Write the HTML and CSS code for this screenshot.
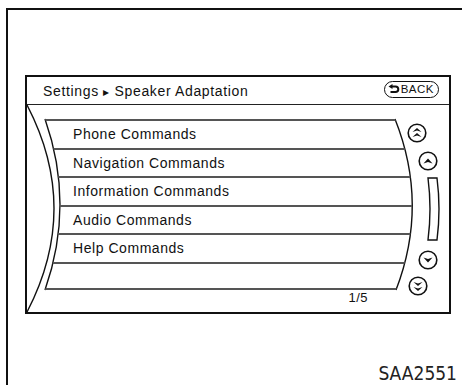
FILE: index.html
```html
<!DOCTYPE html>
<html lang="en">
  <head>
    <meta charset="UTF-8" />
    <meta name="viewport" content="width=device-width, initial-scale=1.0" />
    <title>Speaker Adaptation</title>
    <link rel="stylesheet" href="styles.css">
  </head>
  <body>
    <div class="page">
      <div class="screen">
        <div class="screen-head">
          <span class="crumb">Settings <span class="crumb-sep">&#9656;</span> Speaker Adaptation</span>
          <span class="back-btn">
            <svg class="back-icon" viewBox="0 0 12 10" width="12" height="10">
              <path d="M3.5 2.5 H7.5 A2.8 2.8 0 0 1 7.5 8.1 H2.5" fill="none" stroke="#111" stroke-width="2"/>
              <path d="M0.5 2.5 L4.5 0 L4.5 5 Z" fill="#111"/>
            </svg>BACK
          </span>
        </div>

        <div class="screen-body">
          <!-- decorative curved frame -->
          <svg class="frame-art" viewBox="0 0 422 207" width="422" height="207">
            <path d="M0 0 Q54 103.5 0 207" />
            <path d="M18 14 Q48 99.5 18 185" />
            <path d="M368 14 Q402 99.5 369 185" />
          </svg>

          <div class="menu-col">
            <ul class="menu">
              <li>Phone Commands</li>
              <li>Navigation Commands</li>
              <li>Information Commands</li>
              <li>Audio Commands</li>
              <li>Help Commands</li>
              <li></li>
            </ul>
            <div class="page-count">1/5</div>
          </div>

          <div class="scroll-col">
            <span class="round-btn btn-top">
              <svg viewBox="0 0 20 20" width="20" height="20">
                <circle cx="10" cy="10" r="8.8" />
                <polygon points="5.5,9 10,5 14.5,9 10,7.6" />
                <polygon points="5.5,14 10,10 14.5,14 10,12.6" />
              </svg>
            </span>
            <span class="round-btn btn-up">
              <svg viewBox="0 0 20 20" width="20" height="20">
                <circle cx="10" cy="10" r="8.8" />
                <polygon points="5.5,12.5 10,7.5 14.5,12.5 10,11" />
              </svg>
            </span>
            <span class="scroll-bar">
              <svg viewBox="0 0 15 64" width="15" height="64">
                <path d="M1 1 H10 Q14 32 10 63 H1 Q5 32 1 1 Z" />
              </svg>
            </span>
            <span class="round-btn btn-down">
              <svg viewBox="0 0 20 20" width="20" height="20">
                <circle cx="10" cy="10" r="8.8" />
                <polygon points="5.5,7.5 10,12.5 14.5,7.5 10,9" />
              </svg>
            </span>
            <span class="round-btn btn-bottom">
              <svg viewBox="0 0 20 20" width="20" height="20">
                <circle cx="10" cy="10" r="8.8" />
                <polygon points="5.5,6 10,10 14.5,6 10,7.4" />
                <polygon points="5.5,11 10,15 14.5,11 10,12.4" />
              </svg>
            </span>
          </div>
        </div>
      </div>

      <div class="fig-code">SAA2551</div>
    </div>
  </body>
</html>
```

FILE: styles.css
```css
/* Speaker Adaptation screen */

* {
  margin: 0;
  padding: 0;
  box-sizing: border-box;
}

body {
  width: 462px;
  height: 385px;
  overflow: hidden;
  background: #fff;
  color: #111;
  font-family: 'Liberation Sans', Arial, sans-serif;
}

/* Outer figure frame */
.page {
  margin: 8px 0 0 6px;
  height: 377px;
  border-top: 2px solid #111;
  border-left: 2px solid #111;
}

/* Display screen */
.screen {
  margin: 65px 0 0 17px;
  width: 426px;
  height: 239px;
  border: 2px solid #111;
  display: flex;
  flex-direction: column;
}

.screen-head {
  height: 28px;
  border-bottom: 1px solid #222;
  display: flex;
  align-items: center;
  justify-content: space-between;
  padding: 0 10px 0 16px;
}

.crumb {
  font-size: 14px;
  letter-spacing: 0.65px;
  white-space: nowrap;
}

.crumb-sep {
  font-size: 12px;
}

.back-btn {
  display: flex;
  align-items: center;
  gap: 1px;
  height: 17px;
  padding: 0 4px 0 3px;
  border: 1.5px solid #111;
  border-radius: 9px;
  font-size: 11.5px;
  letter-spacing: 0.5px;
  margin-top: -3px;
}

.back-icon {
  display: block;
}

/* Body with the curved list */
.screen-body {
  position: relative;
  flex: 1;
  display: flex;
}

.frame-art {
  position: absolute;
  left: 0;
  top: 0;
  pointer-events: none;
}

.frame-art path {
  fill: none;
  stroke: #111;
  stroke-width: 1.4;
}

.menu-col {
  margin: 14px 0 0 18px;
  width: 367px;
  display: flex;
  flex-direction: column;
}

.menu {
  list-style: none;
  height: 171px;
  border-bottom: 2px solid #555;
  clip-path: path('M0 0 L350 0 Q384 85.5 351 171 L0 171 Q30 85.5 0 0 Z');
}

.menu li {
  height: 28.5px;
  border-top: 2px solid #555;
  padding-left: 28px;
  font-size: 14px;
  letter-spacing: 0.55px;
  line-height: 26px;
  white-space: nowrap;
}

.page-count {
  text-align: right;
  padding-right: 44px;
  font-size: 13px;
  letter-spacing: 0.5px;
  line-height: 15px;
}

/* Scroll controls */
.scroll-col {
  display: flex;
  flex-direction: column;
  align-items: flex-start;
  padding-top: 18px;
  margin-left: -5px;
}

.round-btn svg,
.scroll-bar svg {
  display: block;
}

.round-btn circle {
  fill: #fff;
  stroke: #111;
  stroke-width: 1.6;
}

.round-btn polygon {
  fill: #111;
}

.scroll-bar path {
  fill: none;
  stroke: #111;
  stroke-width: 1.4;
}

.btn-top {
  margin-left: 0;
}

.btn-up {
  margin: 8px 0 0 11px;
}

.scroll-bar {
  margin: 6px 0 0 20px;
}

.btn-down {
  margin: 9px 0 0 11px;
}

.btn-bottom {
  margin: 6px 0 0 1px;
}

/* Figure code */
.fig-code {
  margin-top: 50px;
  text-align: right;
  padding-right: 5px;
  font-family: 'DejaVu Sans Condensed', 'DejaVu Sans', sans-serif;
  font-stretch: condensed;
  font-size: 19px;
  line-height: 19px;
  color: #222;
}
```
